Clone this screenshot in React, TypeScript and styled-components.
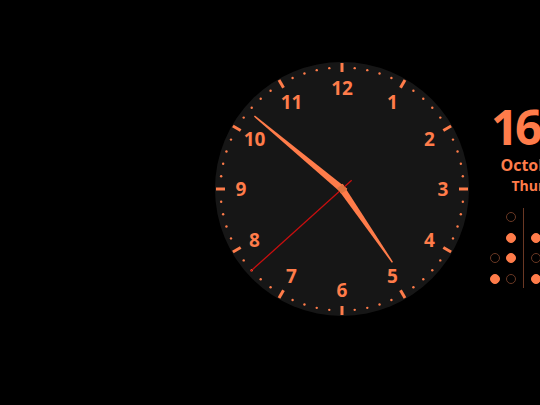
import React from "react";
import styled, { createGlobalStyle } from "styled-components";

const ORANGE = "#ff7c4a";
const DIM = "#6a3824";

const GlobalStyle = createGlobalStyle`
  html, body {
    margin: 0;
    padding: 0;
    background: #000;
    overflow: hidden;
  }
  body {
    font-family: "Open Sans", "Noto Sans", sans-serif;
  }
`;

const Page = styled.div`
  width: 540px;
  height: 405px;
  display: flex;
  align-items: flex-start;
  padding: 61px 0 0 214px;
  box-sizing: border-box;
  gap: 12px;
  overflow: hidden;
`;

const Face = styled.svg`
  flex: none;
  display: block;
`;

const Side = styled.div`
  flex: none;
  width: 124px;
  margin-top: 38px;
  display: flex;
  flex-direction: column;
  align-items: center;
  color: ${ORANGE};
  font-weight: 700;
`;

const Time = styled.div`
  font-size: 48px;
  line-height: 56px;
  letter-spacing: -3.5px;
`;

const DateLine = styled.div`
  font-size: 16px;
  line-height: 21px;
`;

const DayLine = styled.div`
  font-size: 14px;
  line-height: 20px;
`;

const Binary = styled.div`
  display: flex;
  margin-top: 16px;
  gap: 6px;
`;

const Column = styled.div`
  display: flex;
  flex-direction: column;
  justify-content: flex-end;
  gap: 10.5px;
  width: 10px;
`;

const Dot = styled.div<{ $on: boolean }>`
  width: 10px;
  height: 10px;
  border-radius: 50%;
  box-sizing: border-box;
  background: ${(p) => (p.$on ? ORANGE : "transparent")};
  border: 1.5px solid ${(p) => (p.$on ? ORANGE : DIM)};
`;

const Gap = styled.div`
  height: 10px;
`;

const Divider = styled.div`
  width: 1.5px;
  align-self: stretch;
  background: ${DIM};
  margin: -4px 1px -4px;
`;

const hours = 16;
const minutes = 51;
const seconds = 38;

const R = 127;
const C = 128;

function polar(r: number, deg: number) {
  const a = ((deg - 90) * Math.PI) / 180;
  return [C + r * Math.cos(a), C + r * Math.sin(a)];
}

function Hand({ angle, length, base, tip }: { angle: number; length: number; base: number; tip: number }) {
  const pts = [
    [-base / 2, 4],
    [base / 2, 4],
    [tip / 2, -length],
    [-tip / 2, -length],
  ]
    .map((p) => p.join(","))
    .join(" ");
  return <polygon points={pts} fill={ORANGE} transform={`translate(${C} ${C}) rotate(${angle})`} />;
}

function ClockFace() {
  const minAngle = (minutes + seconds / 60) * 6;
  const hourAngle = ((hours % 12) + minutes / 60) * 30;
  const secAngle = seconds * 6;
  const marks = [];
  for (let i = 0; i < 60; i++) {
    if (i % 5 === 0) {
      const [x1, y1] = polar(117, i * 6);
      const [x2, y2] = polar(126, i * 6);
      marks.push(<line key={i} x1={x1} y1={y1} x2={x2} y2={y2} stroke={ORANGE} strokeWidth={3} />);
    } else {
      const [x, y] = polar(121.5, i * 6);
      marks.push(<circle key={i} cx={x} cy={y} r={1.2} fill={ORANGE} />);
    }
  }
  const nums = [];
  for (let n = 1; n <= 12; n++) {
    const [x, y] = polar(101, n * 30);
    nums.push(
      <text
        key={n}
        x={x}
        y={y}
        textAnchor="middle"
        dominantBaseline="central"
        fill={ORANGE}
        fontSize={19}
        fontWeight={700}
        fontFamily='"Open Sans", "Noto Sans", sans-serif'
      >
        {n}
      </text>
    );
  }
  return (
    <Face width={256} height={256} viewBox="0 0 256 256">
      <circle cx={C} cy={C} r={R} fill="#161616" />
      {marks}
      {nums}
      <Hand angle={hourAngle} length={89} base={7} tip={1.5} />
      <Hand angle={minAngle} length={114} base={7} tip={1.5} />
      <line
        x1={C}
        y1={C + 13}
        x2={C}
        y2={C - 123}
        stroke="#c80f0f"
        strokeWidth={1.3}
        transform={`rotate(${secAngle} ${C} ${C})`}
      />
      <rect
        x={C - 3.5}
        y={C - 3.5}
        width={7}
        height={7}
        fill="#e0733f"
        transform={`rotate(${hourAngle} ${C} ${C})`}
      />
    </Face>
  );
}

function bits(value: number, count: number) {
  const out: (boolean | null)[] = [];
  for (let i = 3; i >= 0; i--) {
    out.push(i < count ? ((value >> i) & 1) === 1 : null);
  }
  return out;
}

function BinaryColumn({ value, count }: { value: number; count: number }) {
  return (
    <Column>
      {bits(value, count).map((b, i) => (b === null ? <Gap key={i} /> : <Dot key={i} $on={b} />))}
    </Column>
  );
}

export default function App() {
  const pad = (n: number) => String(n).padStart(2, "0");
  return (
    <>
      <GlobalStyle />
      <Page>
        <ClockFace />
        <Side>
          <Time>
            {pad(hours)}:{pad(minutes)}
          </Time>
          <DateLine>October 16</DateLine>
          <DayLine>Thursday</DayLine>
          <Binary>
            <BinaryColumn value={Math.floor(hours / 10)} count={2} />
            <BinaryColumn value={hours % 10} count={4} />
            <Divider />
            <BinaryColumn value={Math.floor(minutes / 10)} count={3} />
            <BinaryColumn value={minutes % 10} count={4} />
            <Divider />
            <BinaryColumn value={Math.floor(seconds / 10)} count={3} />
            <BinaryColumn value={seconds % 10} count={4} />
          </Binary>
        </Side>
      </Page>
    </>
  );
}
